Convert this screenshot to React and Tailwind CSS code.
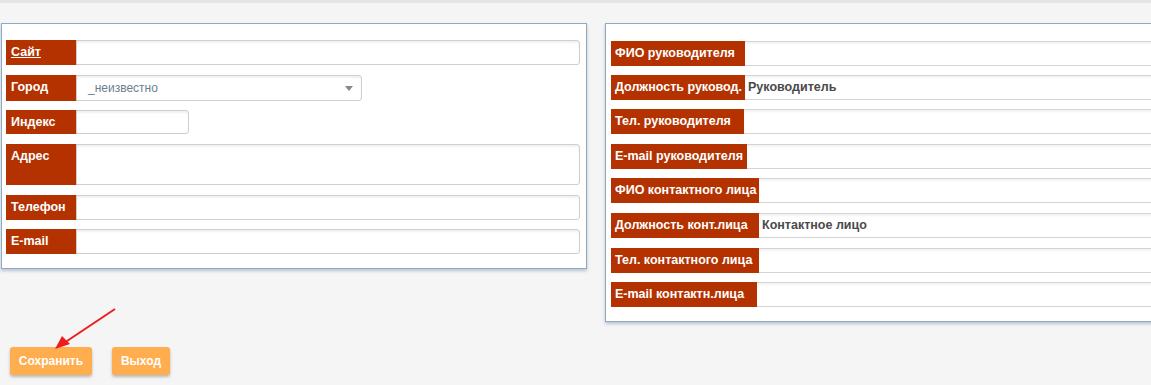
import React from 'react'

const FONT = { fontFamily: '"Liberation Sans", Arial, sans-serif' }

// ── Left panel row ─────────────────────────────
function Row({ label, link, h = 'h-[25px]', mt, input = 'flex-1', children }) {
  return (
    <div className={`flex ${h} ${mt}`}>
      <div className="w-[71px] shrink-0 bg-[#b33200] text-white font-bold text-[12.5px] pl-[5px] pt-[4px] leading-[17px]">
        {link ? <span className="underline">{label}</span> : label}
      </div>
      <div className={`${input} bg-white border border-[#cfcfcf] rounded-r-[3px] shadow-[inset_0_2px_2px_rgba(0,0,0,0.06)] -ml-px`}>
        {children}
      </div>
    </div>
  )
}

// ── Right panel row ────────────────────────────
function WideRow({ label, value, w, mt }) {
  return (
    <div className={`flex h-[25px] ${mt}`}>
      <div className={`${w} shrink-0 bg-[#b33200] text-white font-bold text-[12.5px] pl-[4px] flex items-center whitespace-nowrap overflow-hidden`}>
        {label}
      </div>
      <div className="flex-1 bg-white border-y border-[#d4d4d4] shadow-[inset_0_2px_2px_rgba(0,0,0,0.05)] flex items-center pl-[3px] text-[12.5px] font-bold text-[#4a4a4a]">
        {value}
      </div>
    </div>
  )
}

export default function App() {
  return (
    <div className="relative w-[1151px] h-[385px] bg-[#f5f5f5] overflow-hidden" style={FONT}>
      <div className="h-[3px] bg-[#e4e4e6]" />

      <div className="flex items-start mt-[20px]">
        {/* Left panel */}
        <div className="shrink-0 ml-[1px] w-[586px] bg-white border border-[#8eaac2] shadow-[0_2px_3px_rgba(80,110,140,0.35)] pl-[4px] pr-[6px] pt-[16px] pb-[14px]">
          <Row label="Сайт" link />
          <Row label="Город" h="h-[26px]" mt="mt-[10px]" input="w-[286px]">
            <div className="flex items-center h-full pl-[11px] pr-[8px] text-[12px] text-[#6c7f8e]">
              <span className="flex-1">_неизвестно</span>
              <svg width="8" height="5" viewBox="0 0 8 5">
                <path d="M0 0h8L4 5z" fill="#888" />
              </svg>
            </div>
          </Row>
          <Row label="Индекс" h="h-[24px]" mt="mt-[9px]" input="w-[113px]" />
          <Row label="Адрес" h="h-[41px]" mt="mt-[10px]" />
          <Row label="Телефон" mt="mt-[10px]" />
          <Row label="E-mail" mt="mt-[9px]" />
        </div>

        {/* Right panel */}
        <div className="shrink-0 ml-[18px] w-[600px] bg-white border border-[#8eaac2] shadow-[0_2px_3px_rgba(80,110,140,0.35)] pl-[5px] pt-[17px] pb-[14px]">
          <WideRow label="ФИО руководителя" w="w-[134px]" />
          <WideRow label="Должность руковод." value="Руководитель" w="w-[134px]" mt="mt-[9px]" />
          <WideRow label="Тел. руководителя" w="w-[133px]" mt="mt-[9px]" />
          <WideRow label="E-mail руководителя" w="w-[136px]" mt="mt-[10px]" />
          <WideRow label="ФИО контактного лица" w="w-[148px]" mt="mt-[9px]" />
          <WideRow label="Должность конт.лица" value="Контактное лицо" w="w-[148px]" mt="mt-[10px]" />
          <WideRow label="Тел. контактного лица" w="w-[148px]" mt="mt-[10px]" />
          <WideRow label="E-mail контактн.лица" w="w-[146px]" mt="mt-[9px]" />
        </div>
      </div>

      <div className="flex gap-[20px] ml-[10px] mt-[25px]">
        <button className="w-[82px] h-[28px] bg-[#ffad4f] rounded-[3px] text-white font-bold text-[12px] shadow-[0_2px_3px_rgba(0,0,0,0.25)]">
          Сохранить
        </button>
        <button className="w-[58px] h-[28px] bg-[#ffad4f] rounded-[3px] text-white font-bold text-[12px] shadow-[0_2px_3px_rgba(0,0,0,0.25)]">
          Выход
        </button>
      </div>

      {/* annotation arrow */}
      <svg className="absolute left-0 top-0 pointer-events-none" width="140" height="360">
        <line x1="115" y1="309" x2="64" y2="343" stroke="#ee1c1c" strokeWidth="2" />
        <path d="M55 349 L62 336 L70 344 Z" fill="#ee1c1c" />
      </svg>
    </div>
  )
}
